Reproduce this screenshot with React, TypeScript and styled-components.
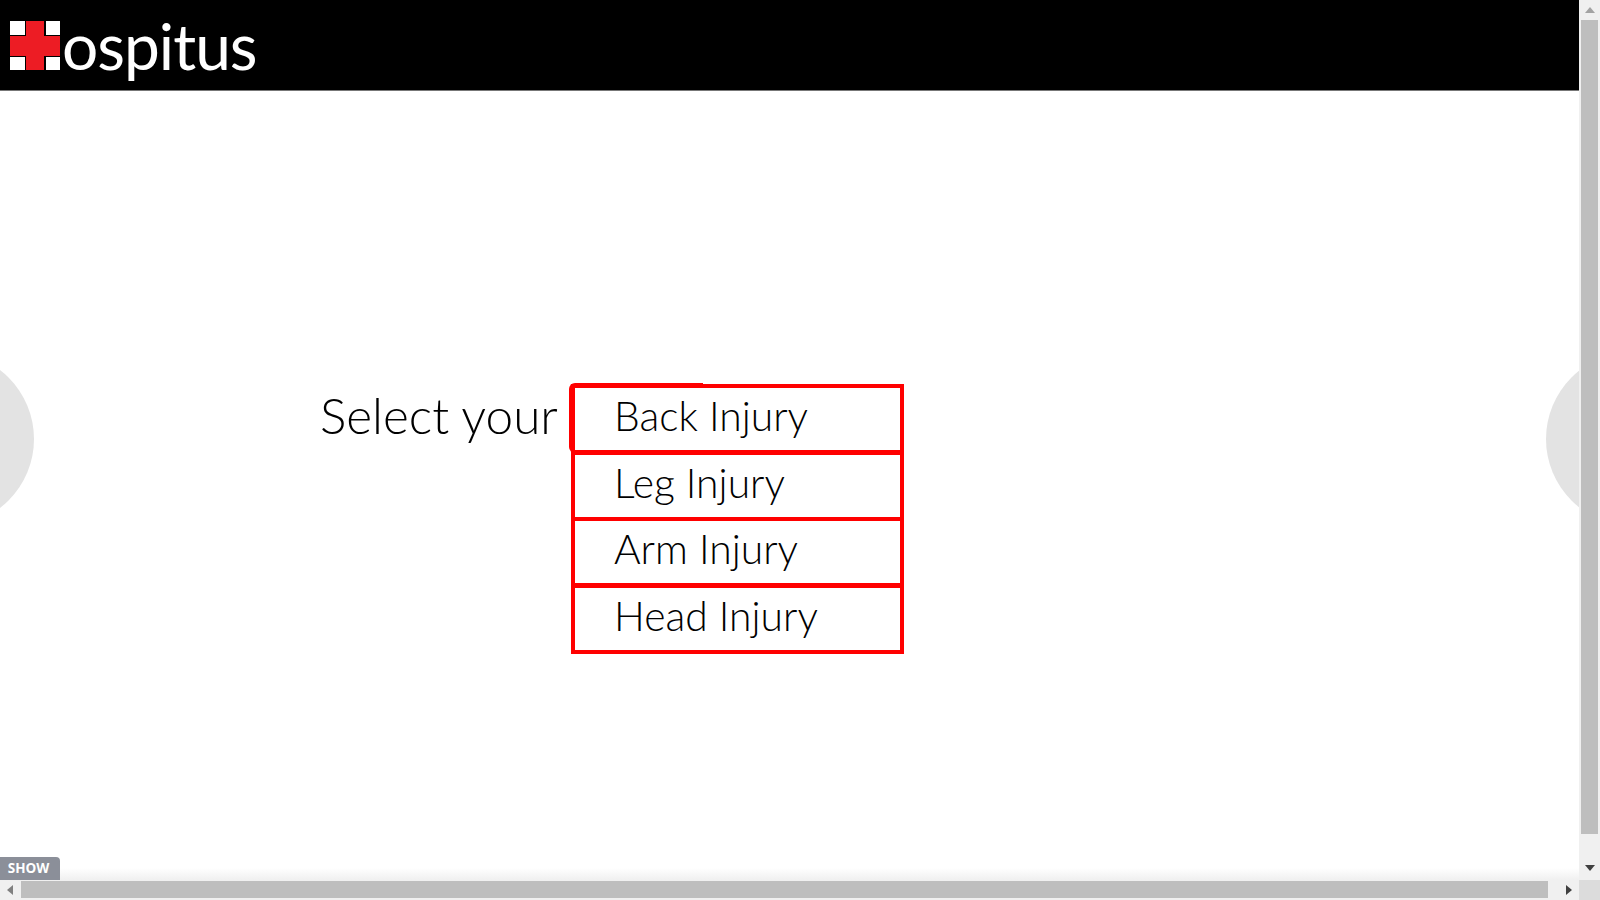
import React from 'react'
import styled, { createGlobalStyle } from 'styled-components'

const injuries = ['Back Injury', 'Leg Injury', 'Arm Injury', 'Head Injury']

export default function App() {
  return (
    <>
      <GlobalStyle />
      <Viewport>
        <Content>
          <Header>
            <LogoMark viewBox="0 0 50 49" aria-hidden="true">
              <rect width="50" height="49" fill="#fff" />
              <rect x="15" y="0" width="3" height="49" fill="#000" />
              <rect x="34" y="0" width="2" height="49" fill="#000" />
              <rect x="0" y="14" width="50" height="2" fill="#000" />
              <rect x="0" y="34" width="50" height="2" fill="#000" />
              <path d="M16 0h18v15h16v20H34v14H16V35H0V15h16z" fill="#ed1c24" />
            </LogoMark>
            <LogoText>ospitus</LogoText>
          </Header>
          <Stage>
            <SideBubble $side="left" />
            <SideBubble $side="right" />
            <Question>
              <Prompt>Select your</Prompt>
              <InjuryList>
                <FocusRing />
                {injuries.map(name => (
                  <InjuryRow key={name}>{name}</InjuryRow>
                ))}
              </InjuryList>
            </Question>
            <ShowTab>SHOW</ShowTab>
          </Stage>
        </Content>
        <VerticalBar>
          <ArrowButton>
            <UpDownArrow viewBox="0 0 10 6" $color="#a3a3a3"><path d="M5 0l5 6H0z" /></UpDownArrow>
          </ArrowButton>
          <VerticalThumb />
          <ArrowButton>
            <UpDownArrow viewBox="0 0 10 6" $color="#404040"><path d="M0 0h10L5 6z" /></UpDownArrow>
          </ArrowButton>
        </VerticalBar>
        <HorizontalBar>
          <ArrowButton>
            <SideArrow viewBox="0 0 6 10" $color="#808080"><path d="M6 0v10L0 5z" /></SideArrow>
          </ArrowButton>
          <HorizontalThumb />
          <ArrowButton>
            <SideArrow viewBox="0 0 6 10" $color="#404040"><path d="M0 0l6 5-6 5z" /></SideArrow>
          </ArrowButton>
        </HorizontalBar>
        <Corner />
      </Viewport>
    </>
  )
}

const GlobalStyle = createGlobalStyle`
  html, body {
    margin: 0;
    height: 100%;
    overflow: hidden;
    background: #fff;
  }
`

const Viewport = styled.div`
  width: 1600px;
  height: 900px;
  display: grid;
  grid-template-columns: 1579px 21px;
  grid-template-rows: 880px 20px;
  font-family: Lato, "Liberation Sans", sans-serif;
`

const Content = styled.div`
  display: flex;
  flex-direction: column;
  overflow: hidden;
`

const Header = styled.header`
  flex: none;
  height: 69px;
  background: #000;
  border-bottom: 1px solid #777;
  display: flex;
  align-items: flex-start;
  padding: 21px 0 0 10px;
`

const LogoMark = styled.svg`
  width: 50px;
  height: 49px;
  flex: none;
`

const LogoText = styled.span`
  color: #fff;
  font-size: 64px;
  font-weight: 400;
  letter-spacing: -1px;
  line-height: 68px;
  margin: -9px 0 0 2px;
`

const Stage = styled.main`
  flex: 1;
  position: relative;
  background: linear-gradient(#fff calc(100% - 12px), #f0f0f0);
  padding-top: 293px;
`

const SideBubble = styled.div<{ $side: 'left' | 'right' }>`
  position: absolute;
  top: 261px;
  width: 174px;
  height: 174px;
  border-radius: 50%;
  background: #e3e3e3;
  ${({ $side }) => ($side === 'left' ? 'left: -140px;' : 'right: -141px;')}
`

const Question = styled.div`
  position: relative;
  display: flex;
  align-items: flex-start;
  margin-left: 320px;
  color: #000;
`

const Prompt = styled.div`
  font-size: 49.5px;
  font-weight: 300;
  line-height: 66px;
  width: 251px;
  margin-top: -2px;
  white-space: nowrap;
`

const InjuryList = styled.div`
  position: relative;
  width: 333px;
  display: flex;
  flex-direction: column;
`

const InjuryRow = styled.div`
  height: 70px;
  box-sizing: border-box;
  border: 4px solid #f00;
  margin-bottom: -3.5px;
  padding-left: 39px;
  font-size: 40.8px;
  font-weight: 300;
  line-height: 56px;
  white-space: nowrap;
`

const FocusRing = styled.div`
  position: absolute;
  left: -2px;
  top: -1px;
  width: 134px;
  height: 70px;
  box-sizing: border-box;
  border-top: 4px solid #f00;
  border-left: 4px solid #f00;
  border-radius: 6px 0 0 6px;
`

const ShowTab = styled.div`
  position: absolute;
  left: 0;
  bottom: 0;
  width: 60px;
  height: 23px;
  background: #8b8f99;
  border-radius: 0 4px 0 0;
  color: #fff;
  font-family: "Open Sans", "Liberation Sans", sans-serif;
  font-size: 13.5px;
  font-weight: 700;
  line-height: 23px;
  padding-right: 3px;
  box-sizing: border-box;
  text-align: center;
`

const VerticalBar = styled.div`
  background: #f0f0f0;
  display: flex;
  flex-direction: column;
  align-items: center;
`

const HorizontalBar = styled.div`
  background: #f0f0f0;
  display: flex;
`

const Corner = styled.div`
  background: #dcdcdc;
`

const ArrowButton = styled.div`
  flex: none;
  width: 20px;
  height: 20px;
  display: flex;
  align-items: center;
  justify-content: center;
`

const UpDownArrow = styled.svg<{ $color: string }>`
  width: 10px;
  height: 6px;
  fill: ${({ $color }) => $color};
`

const SideArrow = styled.svg<{ $color: string }>`
  width: 6px;
  height: 10px;
  fill: ${({ $color }) => $color};
`

const VerticalThumb = styled.div`
  flex: none;
  width: 17px;
  height: 814px;
  background: #bebebe;
  margin-bottom: 24px;
`

const HorizontalThumb = styled.div`
  flex: 1;
  margin: 1px 11px 2px 1px;
  background: #bebebe;
`
